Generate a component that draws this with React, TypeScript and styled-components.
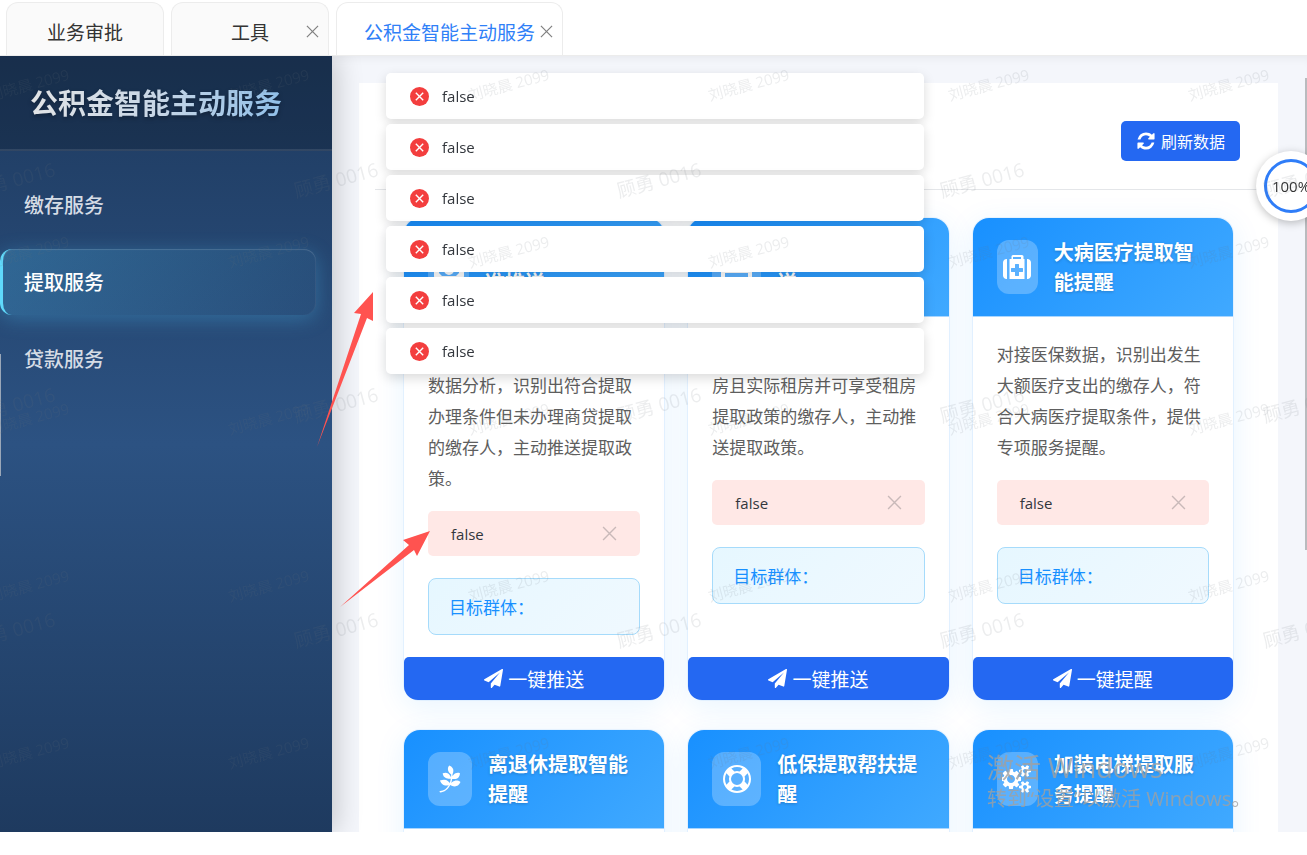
import React from "react";
import styled, { createGlobalStyle } from "styled-components";
import { FaPagelines } from "react-icons/fa";

const GlobalStyle = createGlobalStyle`
  *, *::before, *::after { box-sizing: border-box; }
  html, body, #root { height: 100%; }
  body {
    margin: 0;
    overflow: hidden;
    background: #fff;
    color: #333;
    font-family: "Open Sans", "Noto Sans CJK SC", sans-serif;
  }
  button { font-family: inherit; cursor: pointer; }
  h1, h2, p { margin: 0; }
`;

const Page = styled.div`
  display: flex;
  flex-direction: column;
  height: 100vh;
  padding-bottom: 23px;
`;

const TabBar = styled.nav`
  display: flex;
  align-items: flex-end;
  gap: 7px;
  height: 56px;
  flex: none;
  padding: 0 6px;
  border-bottom: 1px solid #ececec;
`;

const Tab = styled.div<{ $active?: boolean }>`
  display: flex;
  align-items: center;
  justify-content: center;
  position: relative;
  height: 53px;
  min-width: 158px;
  padding: 8px 27px 0;
  border: 1px solid #ececec;
  border-bottom: 0;
  border-radius: 12px 12px 0 0;
  background: ${(p) => (p.$active ? "#fff" : "#fafafa")};
`;

const TabLink = styled.a<{ $active?: boolean }>`
  font-size: 19px;
  line-height: 28px;
  text-decoration: none;
  white-space: nowrap;
  color: ${(p) => (p.$active ? "#2f80f7" : "#333")};
`;

const TabClose = styled.button`
  position: absolute;
  right: 8px;
  top: 21px;
  display: flex;
  padding: 1px;
  border: 0;
  background: none;
  color: #808080;
`;

const Body = styled.div`
  display: flex;
  flex: 1;
  min-height: 0;
  overflow: hidden;
`;

const Sidebar = styled.aside`
  position: relative;
  z-index: 1;
  flex: none;
  width: 332px;
  background: linear-gradient(180deg, #1e3a5f 0%, #2c5282 50%, #1e3a5f 100%);
  box-shadow: 4px 0 26px rgba(0, 0, 0, 0.2);
`;

const Brand = styled.header`
  display: flex;
  align-items: center;
  height: 95px;
  padding-left: 30px;
  background: rgba(0, 0, 0, 0.2);
  border-bottom: 2px solid rgba(255, 255, 255, 0.1);
`;

const BrandTitle = styled.h1`
  font-size: 28px;
  line-height: 40px;
  font-weight: 700;
  white-space: nowrap;
  background: linear-gradient(90deg, #e2e4e6 0%, #c8d6e6 50%, #90bfe8 100%);
  background-clip: text;
  -webkit-background-clip: text;
  color: transparent;
  filter: drop-shadow(0 2px 2px rgba(0, 0, 0, 0.3));
`;

const Menu = styled.nav`
  display: flex;
  flex-direction: column;
  gap: 11px;
  padding: 21px 16px 0 0;
`;

const MenuItem = styled.a<{ $active?: boolean }>`
  display: flex;
  align-items: center;
  height: 66px;
  padding: 0 0 2px ${(p) => (p.$active ? "21px" : "24px")};
  border-radius: 12px;
  border-left: ${(p) => (p.$active ? "3px solid #5fd9fb" : "0")};
  background: ${(p) =>
    p.$active
      ? "linear-gradient(135deg, rgba(79, 195, 247, 0.26), rgba(79, 195, 247, 0.04))"
      : "none"};
  box-shadow: ${(p) =>
    p.$active
      ? "0 4px 20px rgba(79, 195, 247, 0.3), inset 0 1px 1px rgba(255, 255, 255, 0.14), inset -1px 0 1px rgba(255, 255, 255, 0.06)"
      : "none"};
  color: ${(p) => (p.$active ? "#fff" : "#d5dce5")};
  font-size: 20px;
  font-weight: 500;
  text-decoration: none;
`;

const Main = styled.main`
  flex: 1;
  min-width: 0;
  overflow: hidden;
  padding: 27px 29px 0 27px;
  background: #f4f6fb;
  box-shadow: inset 0 8px 10px -6px rgba(0, 0, 0, 0.06);
`;

const Panel = styled.section`
  padding: 0 16px;
  background: #fff;
`;

const PanelHead = styled.div`
  display: flex;
  align-items: center;
  justify-content: flex-end;
  height: 107px;
  padding: 10px 22px 0;
  border-bottom: 1px solid #e4e6e9;
`;

const RefreshButton = styled.button`
  display: flex;
  align-items: center;
  justify-content: center;
  gap: 5px;
  width: 119px;
  height: 40px;
  padding: 0;
  border: 0;
  border-radius: 5px;
  background: #2468f2;
  color: #fff;
  font-size: 16px;
`;

const Grid = styled.div`
  display: grid;
  grid-template-columns: repeat(3, minmax(0, 1fr));
  gap: 30px 24px;
  padding: 28px 29px;
`;

const Card = styled.article`
  display: flex;
  flex-direction: column;
  border-radius: 16px;
  background: #fff;
  box-shadow: 0 0 0 1px rgba(24, 144, 255, 0.08), 0 6px 30px rgba(24, 144, 255, 0.1);
`;

const CardHead = styled.header`
  display: flex;
  align-items: center;
  gap: 16px;
  height: 99px;
  padding: 0 24px;
  border-radius: 16px 16px 0 0;
  border-bottom: 1px solid #a9d6ff;
  background: linear-gradient(135deg, #1890ff, #40a9ff);
  color: #fff;
`;

const CardIcon = styled.span<{ $width: number }>`
  display: flex;
  align-items: center;
  justify-content: center;
  flex: none;
  width: ${(p) => p.$width}px;
  height: 54px;
  border-radius: 12px;
  background: rgba(255, 255, 255, 0.25);
`;

const CardTitle = styled.h2`
  padding-top: 2px;
  font-size: 20px;
  line-height: 30px;
  font-weight: 700;
  text-shadow: 0 1px 3px rgba(0, 0, 0, 0.2);
`;

const CardBody = styled.div`
  flex: 1;
  padding: 22px 24px;
`;

const Description = styled.p`
  font-size: 17px;
  line-height: 31px;
  color: #5e5e5e;
`;

const Alert = styled.div`
  display: flex;
  align-items: center;
  justify-content: space-between;
  height: 45px;
  margin: 17px 0 22px;
  padding: 0 23px;
  border-radius: 5px;
  background: #ffe8e6;
  color: #33373d;
  font-size: 15px;
`;

const AlertClose = styled.button`
  display: flex;
  padding: 0;
  border: 0;
  background: none;
  color: #c9b9b9;
`;

const Target = styled.div`
  display: flex;
  align-items: center;
  height: 57px;
  padding: 0 20px;
  border: 1px solid #a6dbfb;
  border-radius: 8px;
  background: linear-gradient(135deg, #e6f7ff, #f0f9ff);
  color: #1890ff;
  font-size: 17px;
`;

const PushButton = styled.button`
  display: flex;
  align-items: center;
  justify-content: center;
  gap: 5px;
  height: 43px;
  padding: 0;
  border: 0;
  border-radius: 5px 5px 14px 14px;
  background: #2468f2;
  color: #fff;
  font-size: 19px;
`;

const ToastStack = styled.div`
  position: fixed;
  z-index: 3;
  top: 73px;
  left: 0;
  right: 0;
  display: flex;
  flex-direction: column;
  align-items: center;
  gap: 5px;
  padding-left: 3px;
  pointer-events: none;
`;

const Toast = styled.div`
  display: flex;
  align-items: center;
  gap: 13px;
  width: 538px;
  height: 46px;
  padding: 0 24px;
  border-radius: 5px;
  background: #fff;
  box-shadow: 0 4px 12px rgba(0, 0, 0, 0.15);
  color: #33373d;
  font-size: 15px;
`;

const ZoomBadge = styled.div`
  position: fixed;
  z-index: 4;
  top: 151px;
  right: -19px;
  display: flex;
  align-items: center;
  justify-content: center;
  width: 70px;
  height: 70px;
  border-radius: 50%;
  background: #fff;
  box-shadow: 0 2px 8px rgba(0, 0, 0, 0.25);
`;

const ZoomRing = styled.span`
  display: flex;
  align-items: center;
  justify-content: center;
  width: 54px;
  height: 54px;
  border: 3px solid #2f7df8;
  border-radius: 50%;
  font-size: 15px;
`;

const ScrollThumb = styled.span<{ $side: "left" | "right"; $top: number; $height: number }>`
  position: fixed;
  z-index: 2;
  top: ${(p) => p.$top}px;
  ${(p) => p.$side}: 0;
  width: ${(p) => (p.$side === "left" ? 1 : 2)}px;
  height: ${(p) => p.$height}px;
  background: ${(p) => (p.$side === "left" ? "#9aa7b8" : "#b9bbbe")};
`;

const Overlay = styled.svg`
  position: fixed;
  z-index: 5;
  inset: 0;
  width: 100%;
  height: 100%;
  pointer-events: none;
`;

const Activation = styled.div`
  position: fixed;
  z-index: 6;
  right: 60px;
  bottom: 42px;
  width: 260px;
  color: rgba(160, 160, 160, 0.8);
  white-space: nowrap;
  pointer-events: none;
`;

const ActivationTitle = styled.p`
  font-size: 27px;
  line-height: 34px;
`;

const ActivationHint = styled.p`
  font-size: 20px;
  line-height: 28px;
`;

function Cross({ size, width = 1 }: { size: number; width?: number }) {
  return (
    <svg width={size} height={size} viewBox="0 0 14 14" fill="none" stroke="currentColor" strokeWidth={width} aria-hidden="true">
      <path d="M1 1L13 13M13 1L1 13" />
    </svg>
  );
}

function ErrorIcon() {
  return (
    <svg width="19" height="19" viewBox="0 0 19 19" aria-hidden="true">
      <circle cx="9.500" cy="9.500" r="9.500" fill="#f33e3e" />
      <path d="M5.800 5.800L13.200 13.200M13.200 5.800L5.800 13.200" stroke="#fff" strokeWidth="1.400" />
    </svg>
  );
}

function Glyph({ d, size, box = 1792 }: { d: string; size: number; box?: number }) {
  return (
    <svg
      width={Math.round((size * box) / 1792)}
      height={size}
      viewBox={`0 0 ${box} 1792`}
      fill="currentColor"
      fillRule="evenodd"
      aria-hidden="true"
    >
      <path d={d} />
    </svg>
  );
}

const glyphs = {
  medkit:
    "M1280 1184v-192q0-14-9-23t-23-9h-224v-224q0-14-9-23t-23-9h-192q-14 0-23 9t-9 23v224h-224q-14 0-23 9t-9 23v192q0 14 9 23t23 9h224v224q0 14 9 23t23 9h192q14 0 23-9t9-23v-224h224q14 0 23-9t9-23zm-640-800h512v-128h-512v128zm-384 0v1280h-32q-92 0-158-66t-66-158v-832q0-92 66-158t158-66h32zm1120 0v1280h-960v-1280h128v-160q0-40 28-68t68-28h576q40 0 68 28t28 68v160h128zm416 224v832q0 92-66 158t-158 66h-32v-1280h32q92 0 158 66t66 158z",
  plane:
    "M1764 11q33 24 27 64l-256 1536q-5 29-32 45-14 8-31 8-11 0-24-5l-453-185-242 295q-18 23-49 23-13 0-22-4-19-7-30.500-23.500t-11.500-36.500v-349l864-1059-1069 925-395-162q-37-14-40-55-2-40 32-59l1664-960q15-9 32-9 20 0 36 11z",
  refresh:
    "M1639 1056q0 5-1 7-64 268-268 434.500t-478 166.500q-146 0-282.500-55t-243.500-157l-129 129q-19 19-45 19t-45-19-19-45v-448q0-26 19-45t45-19h448q26 0 45 19t19 45-19 45l-137 137q71 66 161 102t187 36q134 0 250-65t186-179q11-17 53-117 8-23 30-23h192q13 0 22.500 9.500t9.500 22.500zm25-800v448q0 26-19 45t-45 19h-448q-26 0-45-19t-19-45 19-45l138-138q-148-137-349-137-134 0-250 65t-186 179q-11 17-53 117-8 23-30 23h-199q-13 0-22.500-9.500t-9.500-22.500v-7q65-268 270-434.500t480-166.500q146 0 284 55.500t245 156.500l130-129q19-19 45-19t45 19 19 45z",
  lifeRing:
    "M896 0q182 0 348 71t286 191 191 286 71 348-71 348-191 286-286 191-348 71-348-71-286-191-191-286-71-348 71-348 191-286 286-191 348-71zm0 128q-190 0-361 90l194 194q82-28 167-28t167 28l194-194q-171-90-361-90zm-678 1129l194-194q-28-82-28-167t28-167l-194-194q-90 171-90 361t90 361zm678 407q190 0 361-90l-194-194q-82 28-167 28t-167-28l-194 194q171 90 361 90zm0-384q159 0 271.500-112.500t112.500-271.500-112.500-271.500-271.500-112.500-271.500 112.500-112.500 271.500 112.500 271.500 271.500 112.500zm484-217l194 194q90-171 90-361t-90-361l-194 194q28 82 28 167t-28 167z",
  cogs:
    "M832 896q0-106-75-181t-181-75-181 75-75 181 75 181 181 75 181-75 75-181zm768 512q0-52-38-90t-90-38-90 38-38 90q0 53 37.500 90.500t90.500 37.500 90.500-37.500 37.500-90.500zm0-1024q0-52-38-90t-90-38-90 38-38 90q0 53 37.500 90.500t90.500 37.500 90.500-37.500 37.500-90.500zm-384 421v185q0 10-7 19.500t-16 10.500l-155 24q-11 35-32 76 34 48 90 115 7 11 7 20 0 12-7 19-23 30-82.500 89.500t-78.500 59.500q-11 0-21-7l-115-90q-37 19-77 31-11 108-23 155-7 24-30 24h-186q-11 0-20-7.500t-10-17.500l-23-153q-34-10-75-31l-118 89q-7 7-20 7-11 0-21-8-144-133-144-160 0-9 7-19 10-14 41-53t47-61q-23-44-35-82l-152-24q-10-1-17-9.500t-7-19.500v-185q0-10 7-19.500t16-10.500l155-24q11-35 32-76-34-48-90-115-7-11-7-20 0-12 7-20 22-30 82-89t79-59q11 0 21 7l115 90q34-18 77-32 11-108 23-154 7-24 30-24h186q11 0 20 7.500t10 17.500l23 153q34 10 75 31l118-89q8-7 20-7 11 0 21 8 144 133 144 160 0 8-7 19-12 16-42 54t-45 60q23 48 34 82l152 23q10 2 17 10.500t7 19.500zm640 533v140q0 16-149 31-12 27-30 52 51 113 51 138 0 4-4 7-122 71-124 71-8 0-46-47t-52-68q-20 2-30 2t-30-2q-14 21-52 68t-46 47q-2 0-124-71-4-3-4-7 0-25 51-138-18-25-30-52-149-15-149-31v-140q0-16 149-31 13-29 30-52-51-113-51-138 0-4 4-7 4-2 35-20t59-34 30-16q8 0 46 46.500t52 67.500q20-2 30-2t30 2q51-71 92-112l6-2q4 0 124 70 4 3 4 7 0 25-51 138 17 23 30 52 149 15 149 31zm0-1024v140q0 16-149 31-12 27-30 52 51 113 51 138 0 4-4 7-122 71-124 71-8 0-46-47t-52-68q-20 2-30 2t-30-2q-14 21-52 68t-46 47q-2 0-124-71-4-3-4-7 0-25 51-138-18-25-30-52-149-15-149-31v-140q0-16 149-31 13-29 30-52-51-113-51-138 0-4 4-7 4-2 35-20t59-34 30-16q8 0 46 46.500t52 67.500q20-2 30-2t30 2q51-71 92-112l6-2q4 0 124 70 4 3 4 7 0 25-51 138 17 23 30 52 149 15 149 31z",
};

function LoanIcon() {
  return (
    <svg width="30" height="28" viewBox="0 0 30 28" fill="currentColor" fillRule="evenodd" aria-hidden="true">
      <path d="M3 2H27A3 3 0 0 1 30 5V23A3 3 0 0 1 27 26H3A3 3 0 0 1 0 23V5A3 3 0 0 1 3 2ZM5 17V20L8 23H22L25 20V17H20A5 5 0 0 1 10 17Z" />
    </svg>
  );
}

function RentIcon() {
  return (
    <svg width="31" height="28" viewBox="0 0 31 28" fill="currentColor" fillRule="evenodd" aria-hidden="true">
      <path d="M3 1H28A3 3 0 0 1 31 4V27H0V4A3 3 0 0 1 3 1ZM4 20V25H27V20Z" />
    </svg>
  );
}

interface Service {
  title: string;
  icon: React.ReactNode;
  iconWidth: number;
  description: string;
  action: string;
}

const services: Service[] = [
  {
    title: "商贷提取智能精准推送",
    icon: <LoanIcon />,
    iconWidth: 41,
    description:
      "基于公积金贷款和商业贷款数据分析，识别出符合提取办理条件但未办理商贷提取的缴存人，主动推送提取政策。",
    action: "一键推送",
  },
  {
    title: "租房提取精准推送",
    icon: <RentIcon />,
    iconWidth: 49,
    description:
      "对接住建数据识别出本地无房且实际租房并可享受租房提取政策的缴存人，主动推送提取政策。",
    action: "一键推送",
  },
  {
    title: "大病医疗提取智能提醒",
    icon: <Glyph d={glyphs.medkit} size={28} />,
    iconWidth: 41,
    description:
      "对接医保数据，识别出发生大额医疗支出的缴存人，符合大病医疗提取条件，提供专项服务提醒。",
    action: "一键提醒",
  },
  {
    title: "离退休提取智能提醒",
    icon: <FaPagelines size={28} />,
    iconWidth: 44,
    description: "识别出已达到退休年龄的缴存人，主动提醒办理离退休提取。",
    action: "一键提醒",
  },
  {
    title: "低保提取帮扶提醒",
    icon: <Glyph d={glyphs.lifeRing} size={28} />,
    iconWidth: 49,
    description: "对接民政数据，识别出享受低保的缴存人，主动提醒办理提取。",
    action: "一键提醒",
  },
  {
    title: "加装电梯提取服务提醒",
    icon: <Glyph d={glyphs.cogs} size={28} box={1920} />,
    iconWidth: 41,
    description: "识别出加装电梯的缴存人，主动提醒办理加装电梯提取。",
    action: "一键提醒",
  },
];

function ServiceCard({ service }: { service: Service }) {
  return (
    <Card>
      <CardHead>
        <CardIcon $width={service.iconWidth}>{service.icon}</CardIcon>
        <CardTitle>{service.title}</CardTitle>
      </CardHead>
      <CardBody>
        <Description>{service.description}</Description>
        <Alert role="alert">
          false
          <AlertClose aria-label="关闭提示">
            <Cross size={15} width={1.3} />
          </AlertClose>
        </Alert>
        <Target>目标群体：</Target>
      </CardBody>
      <PushButton>
        <Glyph d={glyphs.plane} size={19} />
        {service.action}
      </PushButton>
    </Card>
  );
}

const range = (count: number) => Array.from({ length: count }, (_, i) => i);

function Marks() {
  return (
    <g fill="#6f777f" fillOpacity="0.13">
      {range(5).map((row) =>
        range(6).map((col) => {
          const x = 470 + (col - 2) * 240;
          const y = 101 + row * 167;
          return (
            <text key={`a${row}-${col}`} x={x} y={y} fontSize="15" transform={`rotate(-15 ${x} ${y})`}>
              刘晓晨 2099
            </text>
          );
        })
      )}
      {range(3).map((row) =>
        range(5).map((col) => {
          const x = 619 + (col - 2) * 323;
          const y = 198 + row * 225;
          return (
            <text key={`b${row}-${col}`} x={x} y={y} fontSize="19" transform={`rotate(-15 ${x} ${y})`}>
              顾勇 0016
            </text>
          );
        })
      )}
    </g>
  );
}

export default function App() {
  return (
    <>
      <GlobalStyle />
      <Page>
        <TabBar>
          <Tab>
            <TabLink href="#approval">业务审批</TabLink>
          </Tab>
          <Tab>
            <TabLink href="#tools">工具</TabLink>
            <TabClose aria-label="关闭工具">
              <Cross size={13} width={1.3} />
            </TabClose>
          </Tab>
          <Tab $active>
            <TabLink $active href="#service">
              公积金智能主动服务
            </TabLink>
            <TabClose aria-label="关闭公积金智能主动服务">
              <Cross size={13} width={1.3} />
            </TabClose>
          </Tab>
        </TabBar>
        <Body>
          <Sidebar>
            <Brand>
              <BrandTitle>公积金智能主动服务</BrandTitle>
            </Brand>
            <Menu>
              <MenuItem href="#deposit">缴存服务</MenuItem>
              <MenuItem $active href="#withdraw">
                提取服务
              </MenuItem>
              <MenuItem href="#loan">贷款服务</MenuItem>
            </Menu>
          </Sidebar>
          <Main>
            <Panel>
              <PanelHead>
                <RefreshButton>
                  <Glyph d={glyphs.refresh} size={20} />
                  刷新数据
                </RefreshButton>
              </PanelHead>
              <Grid>
                {services.map((service) => (
                  <ServiceCard key={service.title} service={service} />
                ))}
              </Grid>
            </Panel>
          </Main>
        </Body>
      </Page>

      <ScrollThumb $side="left" $top={354} $height={122} />
      <ScrollThumb $side="right" $top={78} $height={472} />

      <ToastStack>
        {range(6).map((i) => (
          <Toast key={i} role="status">
            <ErrorIcon />
            false
          </Toast>
        ))}
      </ToastStack>

      <ZoomBadge>
        <ZoomRing>100%</ZoomRing>
      </ZoomBadge>

      <Overlay aria-hidden="true">
        <Marks />
        <g fill="#ff5350">
          <path d="M373 292L354 313L361 314L317 447L367 318L373 321Z" />
          <path d="M430 531L403 540L409 545L340 607L414 550L417 556Z" />
        </g>
      </Overlay>

      <Activation>
        <ActivationTitle>激活 Windows</ActivationTitle>
        <ActivationHint>转到“设置”以激活 Windows。</ActivationHint>
      </Activation>
    </>
  );
}
